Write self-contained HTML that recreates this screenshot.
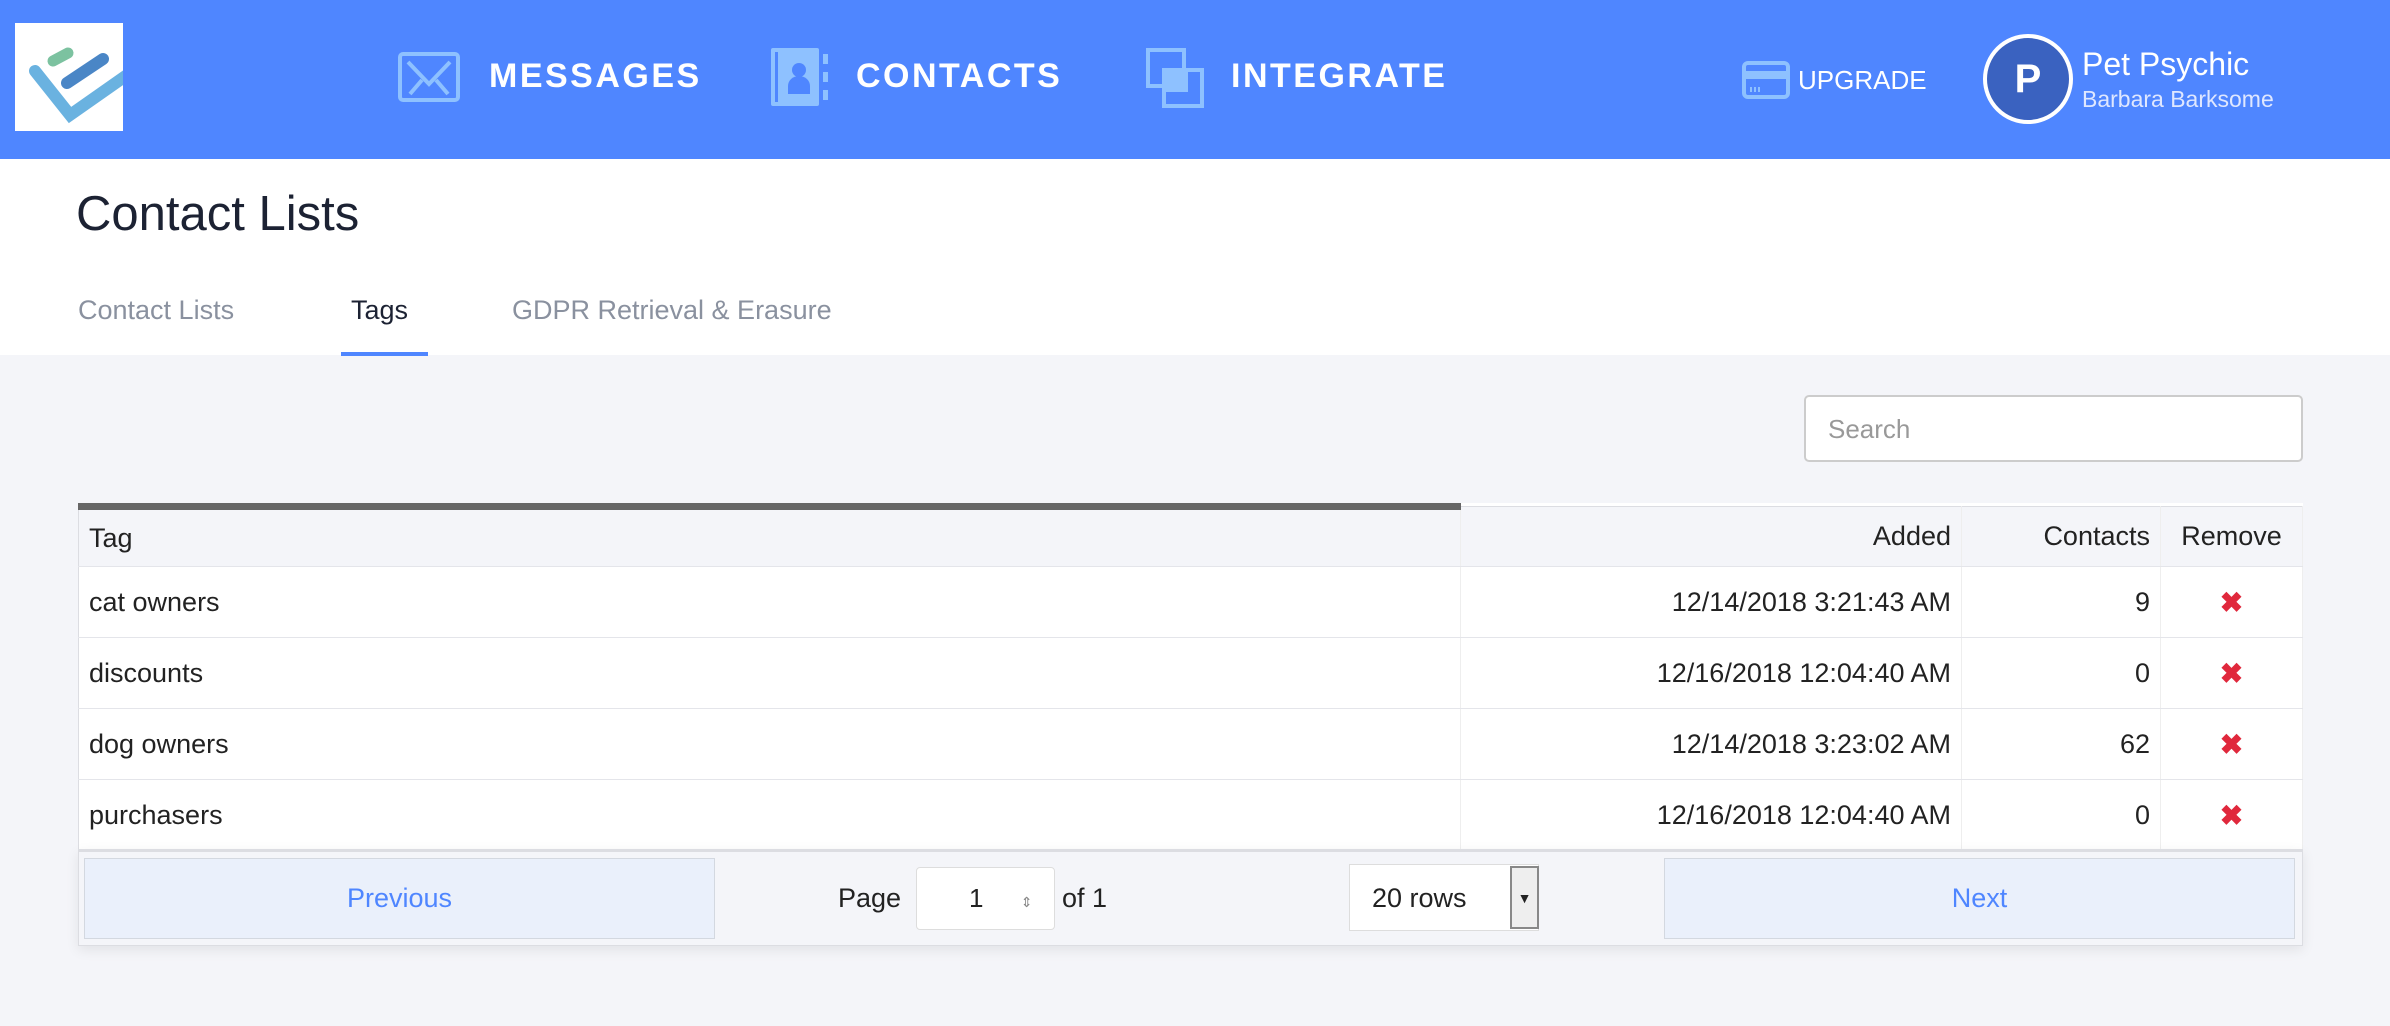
<!DOCTYPE html>
<html><head><meta charset="utf-8"><style>
*{box-sizing:border-box;margin:0;padding:0}
body{width:2390px;height:1026px;background:#f4f5f9;font-family:"Liberation Sans",sans-serif;position:relative;overflow:hidden;color:#222}
.abs{position:absolute}
.hdr{left:0;top:0;width:2390px;height:159px;background:#4f86ff}
.nav{color:#fff;font-weight:bold;font-size:34px;letter-spacing:2.5px;top:57px}
.white{left:0;top:159px;width:2390px;height:196px;background:#fff}
.tab{top:295px;font-size:27px;color:#8a919f}
table{position:absolute;left:78px;top:503px;width:2225px;border-collapse:collapse;font-size:27px;background:#fff;border:1px solid #dcdde2}
td,th{height:71px;padding:0 10px;border-bottom:1px solid #e4e5ea;border-right:1px solid #eee;font-weight:normal;color:#222}
th{background:#f4f5f9;height:60px;text-align:right}
.x{color:#e0283c;font-weight:bold;text-align:center;font-size:28px}
.btn{background:#eaf0fb;border:1px solid #d3d8e0;color:#4f86ff;font-size:27px;text-align:center;line-height:79px;height:81px}
</style></head><body>
<div class="abs hdr"></div>
<div class="abs" style="left:15px;top:23px;width:108px;height:108px;background:#fff">
<svg width="108" height="108" viewBox="0 0 108 108"><g stroke-linecap="round" fill="none"><line x1="38" y1="38" x2="53" y2="30" stroke="#7cc2a0" stroke-width="11"/><line x1="52" y1="60" x2="88" y2="36" stroke="#4a86c6" stroke-width="12"/><polyline points="20,48 55,92 112,52" stroke="#6ab2e0" stroke-width="12"/></g></svg></div>
<svg class="abs" style="left:398px;top:52px" width="62" height="50"><rect x="2" y="2" width="58" height="46" rx="3" fill="none" stroke="#8ec1ff" stroke-width="4"/><path d="M10 10 L31 32 L52 10 M12 42 L24 28 M50 42 L38 28" stroke="#8ec1ff" stroke-width="4" fill="none"/></svg>
<div class="abs nav" style="left:489px">MESSAGES</div>
<svg class="abs" style="left:771px;top:48px" width="58" height="58"><rect x="0" y="0" width="48" height="58" rx="2" fill="#8ec1ff"/><rect x="4" y="4" width="3" height="50" fill="#4f86ff"/><circle cx="28" cy="22" r="7" fill="#4f86ff"/><path d="M17 46 v-8 a11 10 0 0 1 22 0 v8z" fill="#4f86ff"/><rect x="52" y="6" width="5" height="10" fill="#8ec1ff"/><rect x="52" y="24" width="5" height="10" fill="#8ec1ff"/><rect x="52" y="42" width="5" height="10" fill="#8ec1ff"/></svg>
<div class="abs nav" style="left:856px">CONTACTS</div>
<svg class="abs" style="left:1146px;top:48px" width="60" height="60"><rect x="2" y="2" width="36" height="36" fill="none" stroke="#8ec1ff" stroke-width="4"/><rect x="18" y="22" width="38" height="36" fill="none" stroke="#8ec1ff" stroke-width="4"/><rect x="16" y="20" width="26" height="24" fill="#8ec1ff"/></svg>
<div class="abs nav" style="left:1231px">INTEGRATE</div>
<svg class="abs" style="left:1742px;top:61px" width="48" height="38"><rect x="2" y="2" width="44" height="34" rx="4" fill="none" stroke="#8ec1ff" stroke-width="4"/><rect x="2" y="10" width="44" height="8" fill="#8ec1ff"/><path d="M9 26v5M13 26v5M17 26v5" stroke="#8ec1ff" stroke-width="2"/></svg>
<div class="abs" style="left:1798px;top:65px;color:#fff;font-size:26px">UPGRADE</div>
<div class="abs" style="left:1983px;top:34px;width:90px;height:90px;border-radius:50%;background:#3a62c0;border:4px solid #fff;color:#fff;font-weight:bold;font-size:40px;text-align:center;line-height:82px">P</div>
<div class="abs" style="left:2082px;top:46px;color:#fff;font-size:32px">Pet Psychic</div>
<div class="abs" style="left:2082px;top:86px;color:#dfe7ff;font-size:23px">Barbara Barksome</div>
<div class="abs white"></div>
<div class="abs" style="left:76px;top:186px;font-size:49px;color:#1c2233">Contact Lists</div>
<div class="abs tab" style="left:78px">Contact Lists</div>
<div class="abs tab" style="left:351px;color:#1c2233">Tags</div>
<div class="abs tab" style="left:512px">GDPR Retrieval &amp; Erasure</div>
<div class="abs" style="left:341px;top:352px;width:87px;height:4px;background:#4f86ff"></div>
<div class="abs" style="left:1804px;top:395px;width:499px;height:67px;background:#fff;border:2px solid #ccc;border-radius:5px;font-size:26px;color:#999;padding:17px 22px">Search</div>
<table>
<tr><th style="text-align:left;width:1382px;border-top:7px solid #666">Tag</th><th style="width:501px">Added</th><th style="width:199px">Contacts</th><th style="text-align:center">Remove</th></tr>
<tr><td>cat owners</td><td align="right">12/14/2018 3:21:43 AM</td><td align="right">9</td><td class="x">✖</td></tr>
<tr><td>discounts</td><td align="right">12/16/2018 12:04:40 AM</td><td align="right">0</td><td class="x">✖</td></tr>
<tr><td>dog owners</td><td align="right">12/14/2018 3:23:02 AM</td><td align="right">62</td><td class="x">✖</td></tr>
<tr><td>purchasers</td><td align="right">12/16/2018 12:04:40 AM</td><td align="right">0</td><td class="x">✖</td></tr>
</table>
<div class="abs" style="left:78px;top:849px;width:2225px;height:97px;background:#f4f5f9;border:1px solid #dcdde2;border-top:3px solid #dcdde2;box-shadow:0 4px 12px rgba(0,0,0,.08)"></div>
<div class="abs btn" style="left:84px;top:858px;width:631px">Previous</div>
<div class="abs" style="left:838px;top:883px;font-size:27px">Page</div>
<div class="abs" style="left:916px;top:867px;width:139px;height:63px;background:#fff;border:1px solid #ddd;border-radius:4px;font-size:26px;padding:15px 0 0 52px">1 <span style="font-size:14px;color:#888;margin-left:30px">⇕</span></div>
<div class="abs" style="left:1062px;top:883px;font-size:27px">of 1</div>
<div class="abs" style="left:1349px;top:864px;width:190px;height:67px;background:#fff;border:1px solid #ddd;font-size:27px;padding:18px 0 0 22px">20 rows</div>
<div class="abs" style="left:1510px;top:866px;width:29px;height:63px;background:#eee;border:2px solid #888;font-size:14px;text-align:center;padding-top:22px">▼</div>
<div class="abs btn" style="left:1664px;top:858px;width:631px">Next</div>
</body></html>
